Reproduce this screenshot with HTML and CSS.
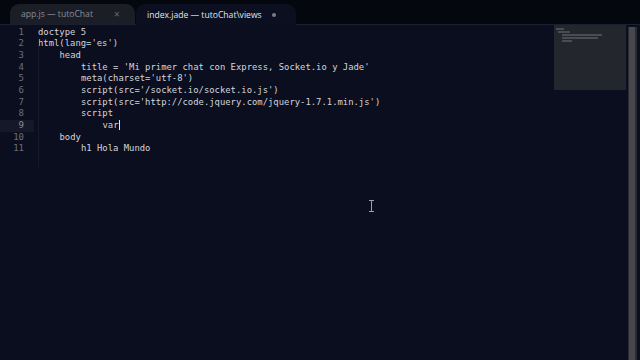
FILE: index.html
```html
<!DOCTYPE html>
<html lang="es">
<head>
<meta charset="utf-8">
<link rel="stylesheet" href="styles.css">
</head>
<body>
<div class="window">
  <div class="tabbar">
    <div class="tab inactive"><span class="tab-title">app.js — tutoChat</span><span class="close">×</span></div>
    <div class="tab active"><span class="tab-title">index.jade — tutoChat\views</span><span class="dot"></span></div>
  </div>
  <div class="editor">
    <div class="gutter">
      <div class="ln">1</div><div class="ln">2</div><div class="ln">3</div><div class="ln">4</div><div class="ln">5</div><div class="ln">6</div><div class="ln">7</div><div class="ln">8</div><div class="ln cur">9</div><div class="ln">10</div><div class="ln">11</div>
    </div>
    <div class="code">
      <div class="line">doctype 5</div>
      <div class="line">html(lang='es')</div>
      <div class="line i1">head</div>
      <div class="line i2">title = 'Mi primer chat con Express, Socket.io y Jade'</div>
      <div class="line i2">meta(charset='utf-8')</div>
      <div class="line i2">script(src='/socket.io/socket.io.js')</div>
      <div class="line i2">script(src='http://code.jquery.com/jquery-1.7.1.min.js')</div>
      <div class="line i2">script</div>
      <div class="line i3">var<span class="caret"></span></div>
      <div class="line i1">body</div>
      <div class="line i2">h1 Hola Mundo</div>
      <div class="guide"></div>
    </div>
    <div class="minimap">
      <div class="mm-line w1"></div>
      <div class="mm-line w2"></div>
      <div class="mm-line w3"></div>
      <div class="mm-line w4"></div>
      <div class="mm-line w5"></div>
    </div>
    <div class="scrollbar"><div class="thumb"></div></div>
    <div class="ibeam"></div>
  </div>
</div>
</body>
</html>
```

FILE: styles.css
```css
* { box-sizing: border-box; margin: 0; padding: 0; }
html, body { width: 640px; height: 360px; overflow: hidden; background: #0a0e1f; }
.window { width: 640px; height: 360px; display: flex; flex-direction: column; }
.tabbar {
  height: 25px;
  background: #05070f;
  display: flex;
  align-items: flex-end;
  padding-left: 10px;
  border-bottom: 1px solid #1b2030;
  position: relative;
}
.tab {
  height: 20px;
  display: flex;
  align-items: center;
  font-family: "Open Sans", "DejaVu Sans", sans-serif;
  font-size: 8.6px;
  border-radius: 9px 9px 0 0;
  position: relative;
}
.tab.inactive {
  width: 125px;
  background: #1b1e27;
  color: #8a8d96;
  padding-left: 11px;
  margin-right: 1px;
}
.tab.inactive .close { margin-left: 21px; color: #6a6d76; font-size: 10px; }
.tab.active {
  width: 160px;
  background: #0b0f20;
  color: #e4e5ea;
  padding-left: 11px;
  height: 21px;
  margin-bottom: -1px;
}
.tab.active .dot {
  width: 4px; height: 4px; border-radius: 50%;
  background: #7a7d86;
  margin-left: 10px;
}
.editor {
  flex: 1;
  display: flex;
  align-items: flex-start;
  position: relative;
  background: #0a0e1f;
  padding-top: 1.5px;
}
.gutter {
  width: 34px;
  font-family: "DejaVu Sans Mono", monospace;
  font-size: 9px;
  color: #6b707c;
  text-align: right;
}
.ln { height: 11.7px; line-height: 11.7px; padding-right: 10px; }
.ln.cur { background: #141829; color: #8a8f9a; }
.code {
  flex: 1;
  position: relative;
  padding-left: 4px;
  font-family: "DejaVu Sans Mono", monospace;
  font-size: 8.9px;
  color: #d4d5da;
}
.line { height: 11.7px; line-height: 11.7px; white-space: pre; }
.i1 { padding-left: 21.5px; }
.i2 { padding-left: 43px; }
.i3 { padding-left: 64.5px; }
.caret {
  display: inline-block;
  width: 1px; height: 10px;
  background: #e8e8e8;
  vertical-align: -2px;
}
.guide {
  position: absolute;
  left: 4px; top: 12px;
  width: 1px; height: 128px;
  background: #161b2c;
}
.minimap {
  position: absolute;
  left: 554px; top: 0;
  width: 72px; height: 65px;
  background: #24262e;
  padding: 3px 2px;
}
.mm-line { height: 2px; margin-bottom: 1px; background: #4a4c55; }
.mm-line.w1 { width: 8px; }
.mm-line.w2 { width: 12px; margin-left: 2px; }
.mm-line.w3 { width: 40px; margin-left: 6px; }
.mm-line.w4 { width: 36px; margin-left: 6px; }
.mm-line.w5 { width: 10px; margin-left: 6px; }
.scrollbar {
  position: absolute;
  right: 3px; top: 2px;
  width: 9px; height: 334px;
  background: #2a2c32;
}
.thumb { width: 6px; height: 100%; margin-left: 1px; background: #46484d; }
.ibeam {
  position: absolute;
  left: 369px; top: 175px;
  width: 5px; height: 12px;
  border-top: 1px solid #9da0a8;
  border-bottom: 1px solid #9da0a8;
}
.ibeam::after {
  content: "";
  position: absolute;
  left: 2px; top: 0;
  width: 1px; height: 10px;
  background: #9da0a8;
}
```
